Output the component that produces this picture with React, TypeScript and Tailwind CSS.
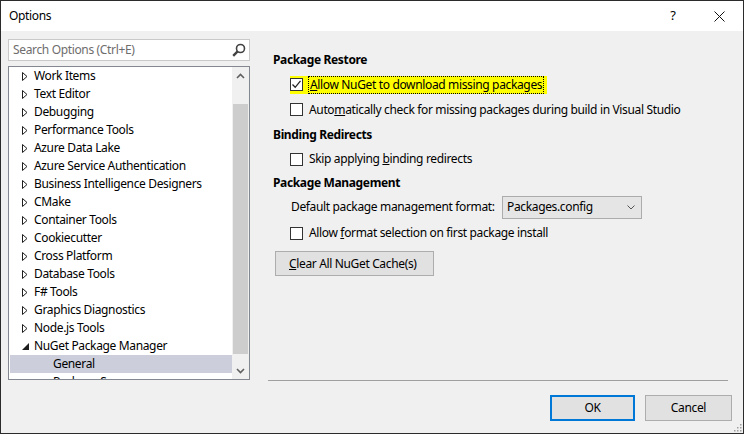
import { useState } from "react";

const treeItems = [
  "Work Items",
  "Text Editor",
  "Debugging",
  "Performance Tools",
  "Azure Data Lake",
  "Azure Service Authentication",
  "Business Intelligence Designers",
  "CMake",
  "Container Tools",
  "Cookiecutter",
  "Cross Platform",
  "Database Tools",
  "F# Tools",
  "Graphics Diagnostics",
  "Node.js Tools",
];

function Collapsed() {
  return (
    <svg width="6" height="9" viewBox="0 0 6 9" className="shrink-0">
      <path d="M0.5 0.5 L5 4.5 L0.5 8.5 Z" fill="white" stroke="#1e1e1e" strokeWidth="1" />
    </svg>
  );
}

function Expanded() {
  return (
    <svg width="7" height="7" viewBox="0 0 7 7" className="shrink-0">
      <path d="M7 0 L7 7 L0 7 Z" fill="#1e1e1e" />
    </svg>
  );
}

function Checkbox({ checked }: { checked?: boolean }) {
  return (
    <div className="w-[13px] h-[13px] border border-[#333333] bg-white flex items-center justify-center shrink-0">
      {checked && (
        <svg width="11" height="11" viewBox="0 0 11 11">
          <path d="M1.5 5.5 L4.2 8.3 L9.5 1.8" fill="none" stroke="#222" strokeWidth="1.3" />
        </svg>
      )}
    </div>
  );
}

export default function App() {
  const [restore, setRestore] = useState(true);

  return (
    <div
      className="w-[744px] h-[434px] border border-[#2b2b2b] bg-[#f0f0f0] flex flex-col text-[12px] tracking-[-0.35px] text-black overflow-hidden relative"
      style={{ fontFamily: '"Segoe UI", "Noto Sans", sans-serif' }}
    >
      {/* title bar */}
      <div className="h-[30px] bg-white flex items-center shrink-0">
        <div className="pl-[8px] flex-1 text-[12px]">Options</div>
        <div className="w-[46px] text-center text-[13px]">?</div>
        <div className="w-[46px] flex justify-center mr-[1px]">
          <svg width="11" height="11" viewBox="0 0 11 11">
            <path d="M0.5 0.5 L10.5 10.5 M10.5 0.5 L0.5 10.5" stroke="#111" strokeWidth="1" />
          </svg>
        </div>
      </div>

      <div className="flex flex-1">
        {/* left column */}
        <div className="w-[249px] pl-[7px] pt-[8px] flex flex-col gap-[5px] shrink-0">
          <div className="h-[22px] border border-[#c9c9c9] bg-white flex items-center pl-[4px] pr-[3px]">
            <span className="flex-1 text-[#6d6d6d]">Search Options (Ctrl+E)</span>
            <svg width="14" height="14" viewBox="0 0 14 14">
              <circle cx="8.5" cy="5.5" r="4" fill="none" stroke="#424242" strokeWidth="1.6" />
              <path d="M5.6 8.4 L1.2 12.8" stroke="#424242" strokeWidth="2.4" />
            </svg>
          </div>
          <div className="h-[314px] border border-[#828790] bg-white flex overflow-hidden">
            <div className="flex-1 pl-[1px] overflow-hidden">
              {treeItems.map((t) => (
                <div key={t} className="h-[18px] flex items-center pl-[12px] gap-[6px] whitespace-nowrap">
                  <Collapsed />
                  <span>{t}</span>
                </div>
              ))}
              <div className="h-[18px] flex items-center pl-[12px] gap-[5px] whitespace-nowrap">
                <Expanded />
                <span>NuGet Package Manager</span>
              </div>
              <div className="h-[18px] flex items-center pl-[43px] bg-[#cccedb] whitespace-nowrap">
                General
              </div>
              <div className="h-[18px] flex items-center pl-[43px] whitespace-nowrap">
                Package Sources
              </div>
            </div>
            <div className="w-[17px] bg-[#f0f0f0] flex flex-col items-center">
              <div className="h-[17px] flex items-center justify-center">
                <svg width="9" height="6" viewBox="0 0 9 6">
                  <path d="M1 5 L4.5 1.5 L8 5" fill="none" stroke="#606060" strokeWidth="1.6" />
                </svg>
              </div>
              <div className="w-[15px] h-[250px] mt-[20px] bg-[#cdcdcd]" />
              <div className="flex-1" />
              <div className="h-[17px] flex items-center justify-center">
                <svg width="9" height="6" viewBox="0 0 9 6">
                  <path d="M1 1 L4.5 4.5 L8 1" fill="none" stroke="#606060" strokeWidth="1.6" />
                </svg>
              </div>
            </div>
          </div>
        </div>

        {/* right panel */}
        <div className="flex-1 pl-[17px] pr-[15px] flex flex-col">
          <div className="pl-[6px] pt-[17px] flex flex-col">
            <div className="h-[24px] flex items-center font-bold">Package Restore</div>
            <div className="h-[25px] flex items-center pl-[17px]">
              <div
                className="flex items-center bg-[#ffff00] pr-[3px] cursor-default"
                onClick={() => setRestore(!restore)}
              >
                <Checkbox checked={restore} />
                <span className="ml-[5px] px-[1px] border border-dotted border-black leading-[16px]">
                  <u>A</u>llow NuGet to download missing packages
                </span>
              </div>
            </div>
            <div className="h-[25px] flex items-center pl-[17px] gap-[6px]">
              <Checkbox />
              <span>
                Auto<u>m</u>atically check for missing packages during build in Visual Studio
              </span>
            </div>
            <div className="h-[25px] flex items-center font-bold">Binding Redirects</div>
            <div className="h-[24px] flex items-center pl-[17px] gap-[6px]">
              <Checkbox />
              <span>
                Skip applying <u>b</u>inding redirects
              </span>
            </div>
            <div className="h-[24px] flex items-center font-bold">Package Management</div>
            <div className="h-[24px] flex items-center pl-[18px]">
              <span className="w-[211px] whitespace-nowrap">Default package management format:</span>
              <div className="w-[140px] h-[23px] border border-[#acacac] bg-[#e5e5e5] flex items-center pl-[4px] pr-[6px]">
                <span className="flex-1">Packages.config</span>
                <svg width="8" height="5" viewBox="0 0 8 5">
                  <path d="M0.5 0.5 L4 4 L7.5 0.5" fill="none" stroke="#555" strokeWidth="1" />
                </svg>
              </div>
            </div>
            <div className="h-[28px] flex items-center pl-[17px] gap-[6px]">
              <Checkbox />
              <span>
                Allow <u>f</u>ormat selection on first package install
              </span>
            </div>
            <div className="mt-[4px] pl-[2px]">
              <button className="w-[159px] h-[25px] border border-[#adadad] bg-[#e1e1e1] text-left pl-[13px]">
                <u>C</u>lear All NuGet Cache(s)
              </button>
            </div>
          </div>
        </div>
      </div>

      {/* footer */}
      <div className="h-[55px] shrink-0 flex flex-col">
        <div className="ml-[267px] mr-[15px] h-[1px] bg-[#a0a0a0]" />
        <div className="flex justify-end gap-[10px] pr-[11px] pt-[14px]">
          <button className="w-[85px] h-[26px] border-2 border-[#0078d7] bg-[#e1e1e1]">OK</button>
          <button className="w-[87px] h-[26px] border border-[#adadad] bg-[#e1e1e1]">Cancel</button>
        </div>
      </div>

      {/* resize grip */}
      <svg width="10" height="10" viewBox="0 0 10 10" className="absolute right-[1px] bottom-[1px]">
        <rect x="8" y="2" width="1.5" height="1.5" fill="#a0a0a0" />
        <rect x="5" y="5" width="1.5" height="1.5" fill="#a0a0a0" />
        <rect x="8" y="5" width="1.5" height="1.5" fill="#a0a0a0" />
        <rect x="2" y="8" width="1.5" height="1.5" fill="#a0a0a0" />
        <rect x="5" y="8" width="1.5" height="1.5" fill="#a0a0a0" />
        <rect x="8" y="8" width="1.5" height="1.5" fill="#a0a0a0" />
      </svg>
    </div>
  );
}
